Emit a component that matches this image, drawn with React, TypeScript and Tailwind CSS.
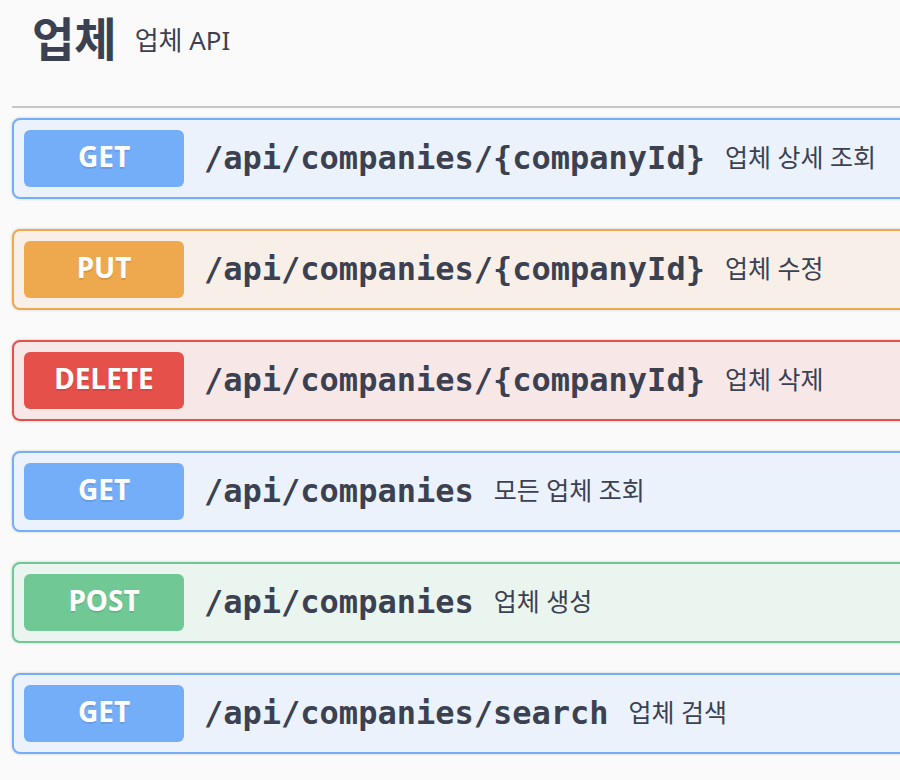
import React from "react";

type Op = {
  method: string;
  path: string;
  desc: string;
  badge: string;
  border: string;
  bg: string;
};

const ops: Op[] = [
  { method: "GET", path: "/api/companies/{companyId}", desc: "업체 상세 조회", badge: "bg-[#74aef8]", border: "border-[#74aef8]", bg: "bg-[#ebf2fb]" },
  { method: "PUT", path: "/api/companies/{companyId}", desc: "업체 수정", badge: "bg-[#eea84d]", border: "border-[#eea84d]", bg: "bg-[#f8f0e8]" },
  { method: "DELETE", path: "/api/companies/{companyId}", desc: "업체 삭제", badge: "bg-[#e5504b]", border: "border-[#e5504b]", bg: "bg-[#f8e7e7]" },
  { method: "GET", path: "/api/companies", desc: "모든 업체 조회", badge: "bg-[#74aef8]", border: "border-[#74aef8]", bg: "bg-[#ebf2fb]" },
  { method: "POST", path: "/api/companies", desc: "업체 생성", badge: "bg-[#70c895]", border: "border-[#70c895]", bg: "bg-[#ebf5ef]" },
  { method: "GET", path: "/api/companies/search", desc: "업체 검색", badge: "bg-[#74aef8]", border: "border-[#74aef8]", bg: "bg-[#ebf2fb]" },
];

const sans = "font-['Noto_Sans','Noto_Sans_CJK_KR',sans-serif]";

export default function App() {
  return (
    <div className="w-[900px] h-[780px] overflow-hidden bg-[#fafafa] pl-[12px] text-[#3b4151]">
      <div className="w-[930px]">
        <div className="h-[108px] border-b-2 border-[#c4c5c9] pb-[30px] pl-[20px] flex items-center">
          <span className={`${sans} text-[46px] font-bold leading-none text-[#3b4151]`}>업체</span>
          <span className={`${sans} text-[26px] leading-none text-[#3b4151] ml-[18px] mt-[4px]`}>업체 API</span>
        </div>
        <div className="pt-[10px] flex flex-col gap-[30px]">
          {ops.map((op, i) => (
            <div
              key={i}
              className={`h-[81px] border-2 rounded-[8px] ${op.border} ${op.bg} p-[10px] flex items-center shadow-[0_0_3px_rgba(0,0,0,0.19)]`}
            >
              <div
                className={`${op.badge} w-[160px] h-[57px] rounded-[6px] flex items-center justify-center pb-[5px] text-white text-[28px] font-bold ${sans} [text-shadow:0_2px_0_rgba(0,0,0,0.1)]`}
              >
                {op.method}
              </div>
              <span className="pl-[20px] pr-[20px] pb-[2px] font-['DejaVu_Sans_Mono',monospace] font-bold text-[32px] text-[#3b4151] whitespace-nowrap">
                {op.path}
              </span>
              <span className={`${sans} text-[25px] pb-[2px] text-[#3b4151] whitespace-nowrap`}>{op.desc}</span>
            </div>
          ))}
        </div>
      </div>
    </div>
  );
}
